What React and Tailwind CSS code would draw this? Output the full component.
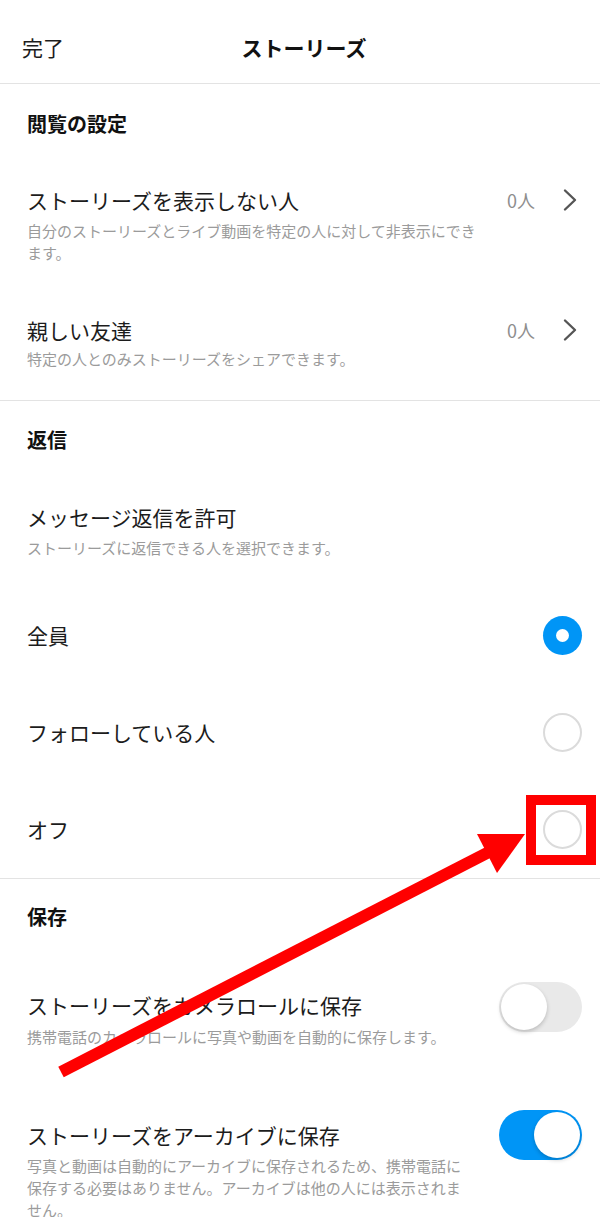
import React from "react";

const font = "font-['Noto_Sans_CJK_JP','Noto_Sans_CJK_SC',sans-serif]";

function Chevron() {
  return (
    <svg width="14" height="24" viewBox="0 0 14 24" fill="none">
      <path d="M2 2.5 L12 12 L2 21.5" stroke="#555555" strokeWidth="2.4" strokeLinecap="round" strokeLinejoin="round" />
    </svg>
  );
}

function LinkItem({ title, sub, className, subClass }) {
  return (
    <div className={`flex items-start ${className}`}>
      <div className="w-[456px]">
        <p className="text-[21px] leading-[28px] text-[#1c1c1c]">{title}</p>
        <p className={`text-[15px] leading-[22px] text-[#9b9b9b] ${subClass}`}>{sub}</p>
      </div>
      <div className="ml-auto pr-[23px] h-[28px] flex items-center gap-[28px]">
        <span className="text-[18px] text-[#8e8e8e]">0人</span>
        <Chevron />
      </div>
    </div>
  );
}

function Radio({ checked }) {
  if (checked) {
    return (
      <div className="w-[39px] h-[39px] rounded-full bg-[#0095f6] flex items-center justify-center">
        <div className="w-[13px] h-[13px] rounded-full bg-white" />
      </div>
    );
  }
  return <div className="w-[39px] h-[39px] rounded-full border-2 border-[#dbdbdb] bg-white" />;
}

function Toggle({ on }) {
  return (
    <div className={`w-[83px] h-[50px] rounded-full flex items-center px-[2px] ${on ? "bg-[#0095f6] justify-end" : "bg-[#e9e9e9] justify-start"}`}>
      <div className="w-[46px] h-[46px] rounded-full bg-white shadow-[0_2px_4px_rgba(0,0,0,0.2)]" />
    </div>
  );
}

export default function App() {
  return (
    <div className={`relative w-[600px] h-[1217px] overflow-hidden bg-white ${font}`}>
      {/* Header */}
      <div className="h-[84px] border-b border-[#e3e3e3] grid grid-cols-[1fr_auto_1fr] items-center pt-[12px] px-[22px]">
        <span className="text-[21px] text-[#1c1c1c]">完了</span>
        <span className="text-[21px] font-bold text-[#111] pl-[8px]">ストーリーズ</span>
        <span />
      </div>

      {/* 閲覧の設定 */}
      <div className="pl-[27px] pt-[26px] pb-[30px] border-b border-[#e3e3e3]">
        <p className="text-[20px] leading-[28px] font-bold text-[#111]">閲覧の設定</p>
        <LinkItem
          className="mt-[48px]"
          subClass="mt-[6px]"
          title="ストーリーズを表示しない人"
          sub="自分のストーリーズとライブ動画を特定の人に対して非表示にできます。"
        />
        <LinkItem
          className="mt-[52px]"
          subClass="mt-[4px]"
          title="親しい友達"
          sub="特定の人とのみストーリーズをシェアできます。"
        />
      </div>

      {/* 返信 */}
      <div className="pl-[27px] pt-[25px] border-b border-[#e3e3e3]">
        <p className="text-[20px] leading-[28px] font-bold text-[#111]">返信</p>
        <div className="mt-[49px]">
          <p className="text-[21px] leading-[28px] text-[#1c1c1c]">メッセージ返信を許可</p>
          <p className="mt-[6px] text-[15px] leading-[22px] text-[#9b9b9b]">ストーリーズに返信できる人を選択できます。</p>
        </div>
        <div className="mt-[28px]">
          {[
            ["全員", true],
            ["フォローしている人", false],
            ["オフ", false],
          ].map(([label, checked]) => (
            <div key={label} className="h-[97px] flex items-center justify-between pr-[18px]">
              <span className="text-[21px] text-[#1c1c1c]">{label}</span>
              <Radio checked={checked} />
            </div>
          ))}
        </div>
      </div>

      {/* 保存 */}
      <div className="pl-[27px] pt-[24px]">
        <p className="text-[20px] leading-[28px] font-bold text-[#111]">保存</p>
        <div className="mt-[60px] flex items-start justify-between pr-[18px]">
          <div className="w-[445px]">
            <p className="text-[21px] leading-[28px] text-[#1c1c1c]">ストーリーズをカメラロールに保存</p>
            <p className="mt-[7px] text-[15px] leading-[22px] text-[#9b9b9b]">携帯電話のカメラロールに写真や動画を自動的に保存します。</p>
          </div>
          <div className="-mt-[9px]">
            <Toggle on={false} />
          </div>
        </div>
        <div className="mt-[73px] flex items-start justify-between pr-[18px]">
          <div className="w-[445px]">
            <p className="text-[21px] leading-[28px] text-[#1c1c1c]">ストーリーズをアーカイブに保存</p>
            <p className="mt-[6px] text-[15px] leading-[22px] text-[#9b9b9b]">写真と動画は自動的にアーカイブに保存されるため、携帯電話に保存する必要はありません。アーカイブは他の人には表示されません。</p>
          </div>
          <div className="-mt-[11px]">
            <Toggle on={true} />
          </div>
        </div>
      </div>

      {/* annotation overlay */}
      <svg className="absolute inset-0 pointer-events-none" width="600" height="1217" viewBox="0 0 600 1217">
        <rect x="531" y="800" width="60" height="60" fill="none" stroke="#ff0000" strokeWidth="10" />
        <line x1="61" y1="1072" x2="489" y2="852" stroke="#ff0000" strokeWidth="12" />
        <polygon points="477,834 525,834 497,873" fill="#ff0000" />
      </svg>
    </div>
  );
}
